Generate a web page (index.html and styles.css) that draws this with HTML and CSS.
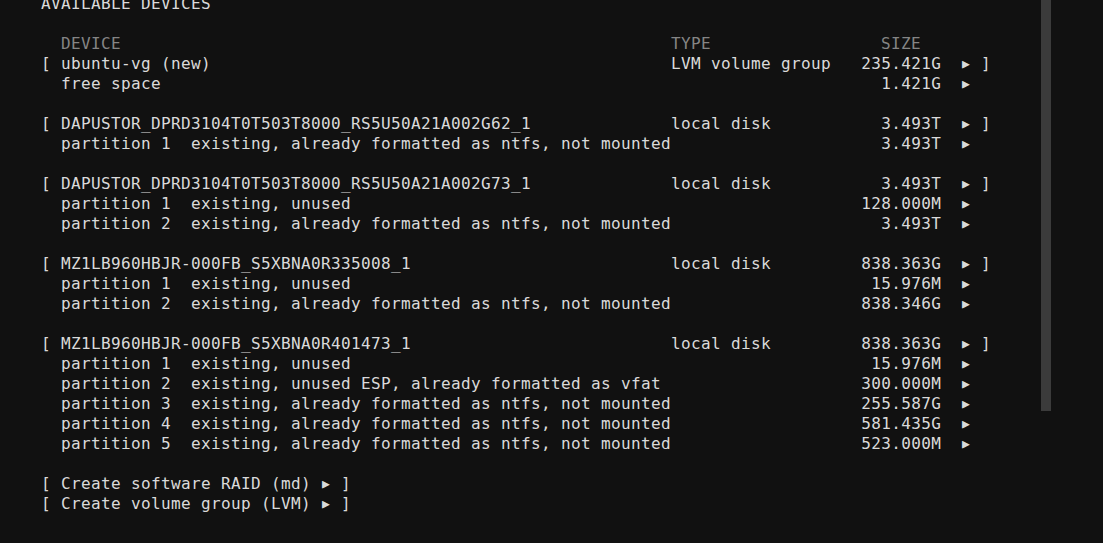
FILE: index.html
```html
<!DOCTYPE html>
<html>
<head>
<meta charset="utf-8">
<link rel="stylesheet" href="styles.css">
</head>
<body>
<div class="screen">
  <div class="content">
    <div class="line">AVAILABLE DEVICES</div>
    <div class="line"></div>
    <div class="row head"><span></span><span>DEVICE</span><span>TYPE</span><span class="sizehead">SIZE</span><span></span><span></span><span></span><span></span></div>

    <div class="row"><span>[</span><span>ubuntu-vg (new)</span><span>LVM volume group</span><span class="size">235.421G</span><span></span><span class="arr">▶</span><span></span><span>]</span></div>
    <div class="row"><span></span><span>free space</span><span></span><span class="size">1.421G</span><span></span><span class="arr">▶</span><span></span><span></span></div>
    <div class="line"></div>

    <div class="row"><span>[</span><span>DAPUSTOR_DPRD3104T0T503T8000_RS5U50A21A002G62_1</span><span>local disk</span><span class="size">3.493T</span><span></span><span class="arr">▶</span><span></span><span>]</span></div>
    <div class="row"><span></span><span>partition 1  existing, already formatted as ntfs, not mounted</span><span></span><span class="size">3.493T</span><span></span><span class="arr">▶</span><span></span><span></span></div>
    <div class="line"></div>

    <div class="row"><span>[</span><span>DAPUSTOR_DPRD3104T0T503T8000_RS5U50A21A002G73_1</span><span>local disk</span><span class="size">3.493T</span><span></span><span class="arr">▶</span><span></span><span>]</span></div>
    <div class="row"><span></span><span>partition 1  existing, unused</span><span></span><span class="size">128.000M</span><span></span><span class="arr">▶</span><span></span><span></span></div>
    <div class="row"><span></span><span>partition 2  existing, already formatted as ntfs, not mounted</span><span></span><span class="size">3.493T</span><span></span><span class="arr">▶</span><span></span><span></span></div>
    <div class="line"></div>

    <div class="row"><span>[</span><span>MZ1LB960HBJR-000FB_S5XBNA0R335008_1</span><span>local disk</span><span class="size">838.363G</span><span></span><span class="arr">▶</span><span></span><span>]</span></div>
    <div class="row"><span></span><span>partition 1  existing, unused</span><span></span><span class="size">15.976M</span><span></span><span class="arr">▶</span><span></span><span></span></div>
    <div class="row"><span></span><span>partition 2  existing, already formatted as ntfs, not mounted</span><span></span><span class="size">838.346G</span><span></span><span class="arr">▶</span><span></span><span></span></div>
    <div class="line"></div>

    <div class="row"><span>[</span><span>MZ1LB960HBJR-000FB_S5XBNA0R401473_1</span><span>local disk</span><span class="size">838.363G</span><span></span><span class="arr">▶</span><span></span><span>]</span></div>
    <div class="row"><span></span><span>partition 1  existing, unused</span><span></span><span class="size">15.976M</span><span></span><span class="arr">▶</span><span></span><span></span></div>
    <div class="row"><span></span><span>partition 2  existing, unused ESP, already formatted as vfat</span><span></span><span class="size">300.000M</span><span></span><span class="arr">▶</span><span></span><span></span></div>
    <div class="row"><span></span><span>partition 3  existing, already formatted as ntfs, not mounted</span><span></span><span class="size">255.587G</span><span></span><span class="arr">▶</span><span></span><span></span></div>
    <div class="row"><span></span><span>partition 4  existing, already formatted as ntfs, not mounted</span><span></span><span class="size">581.435G</span><span></span><span class="arr">▶</span><span></span><span></span></div>
    <div class="row"><span></span><span>partition 5  existing, already formatted as ntfs, not mounted</span><span></span><span class="size">523.000M</span><span></span><span class="arr">▶</span><span></span><span></span></div>
    <div class="line"></div>

    <div class="line">[ Create software RAID (md) <span class="arr">▶</span> ]</div>
    <div class="line">[ Create volume group (LVM) <span class="arr">▶</span> ]</div>
    <div class="line"></div>
  </div>
  <div class="track"><div class="thumb"></div></div>
</div>
</body>
</html>
```

FILE: styles.css
```css
html, body {
  margin: 0;
  padding: 0;
  background: #111111;
  height: 100%;
  overflow: hidden;
}

.screen {
  display: flex;
  margin-top: -6px;
  padding-left: 41px;
  font-family: "DejaVu Sans Mono", "Liberation Mono", monospace;
  font-size: 16px;
  letter-spacing: 0.3672px;
  line-height: 20px;
  color: #dadada;
}

.content {
  width: 1000px;
}

.line {
  height: 20px;
  white-space: pre;
}

.row {
  display: grid;
  grid-template-columns: 20px 610px 190px 80px 20px 10px 10px 10px;
  height: 20px;
  white-space: pre;
}

.head {
  color: #858585;
}

.sizehead {
  padding-left: 20px;
}

.size {
  text-align: right;
  margin-right: -0.3672px;
}

.arr {
  display: inline-block;
  width: 10px;
  height: 20px;
  font-family: "DejaVu Sans Mono", monospace;
  font-size: 13px;
  line-height: 19px;
  letter-spacing: 0;
  text-align: center;
  vertical-align: top;
  overflow: visible;
}

.track {
  width: 10px;
}

.thumb {
  height: 417px;
  background: #3b3b3b;
}
```
